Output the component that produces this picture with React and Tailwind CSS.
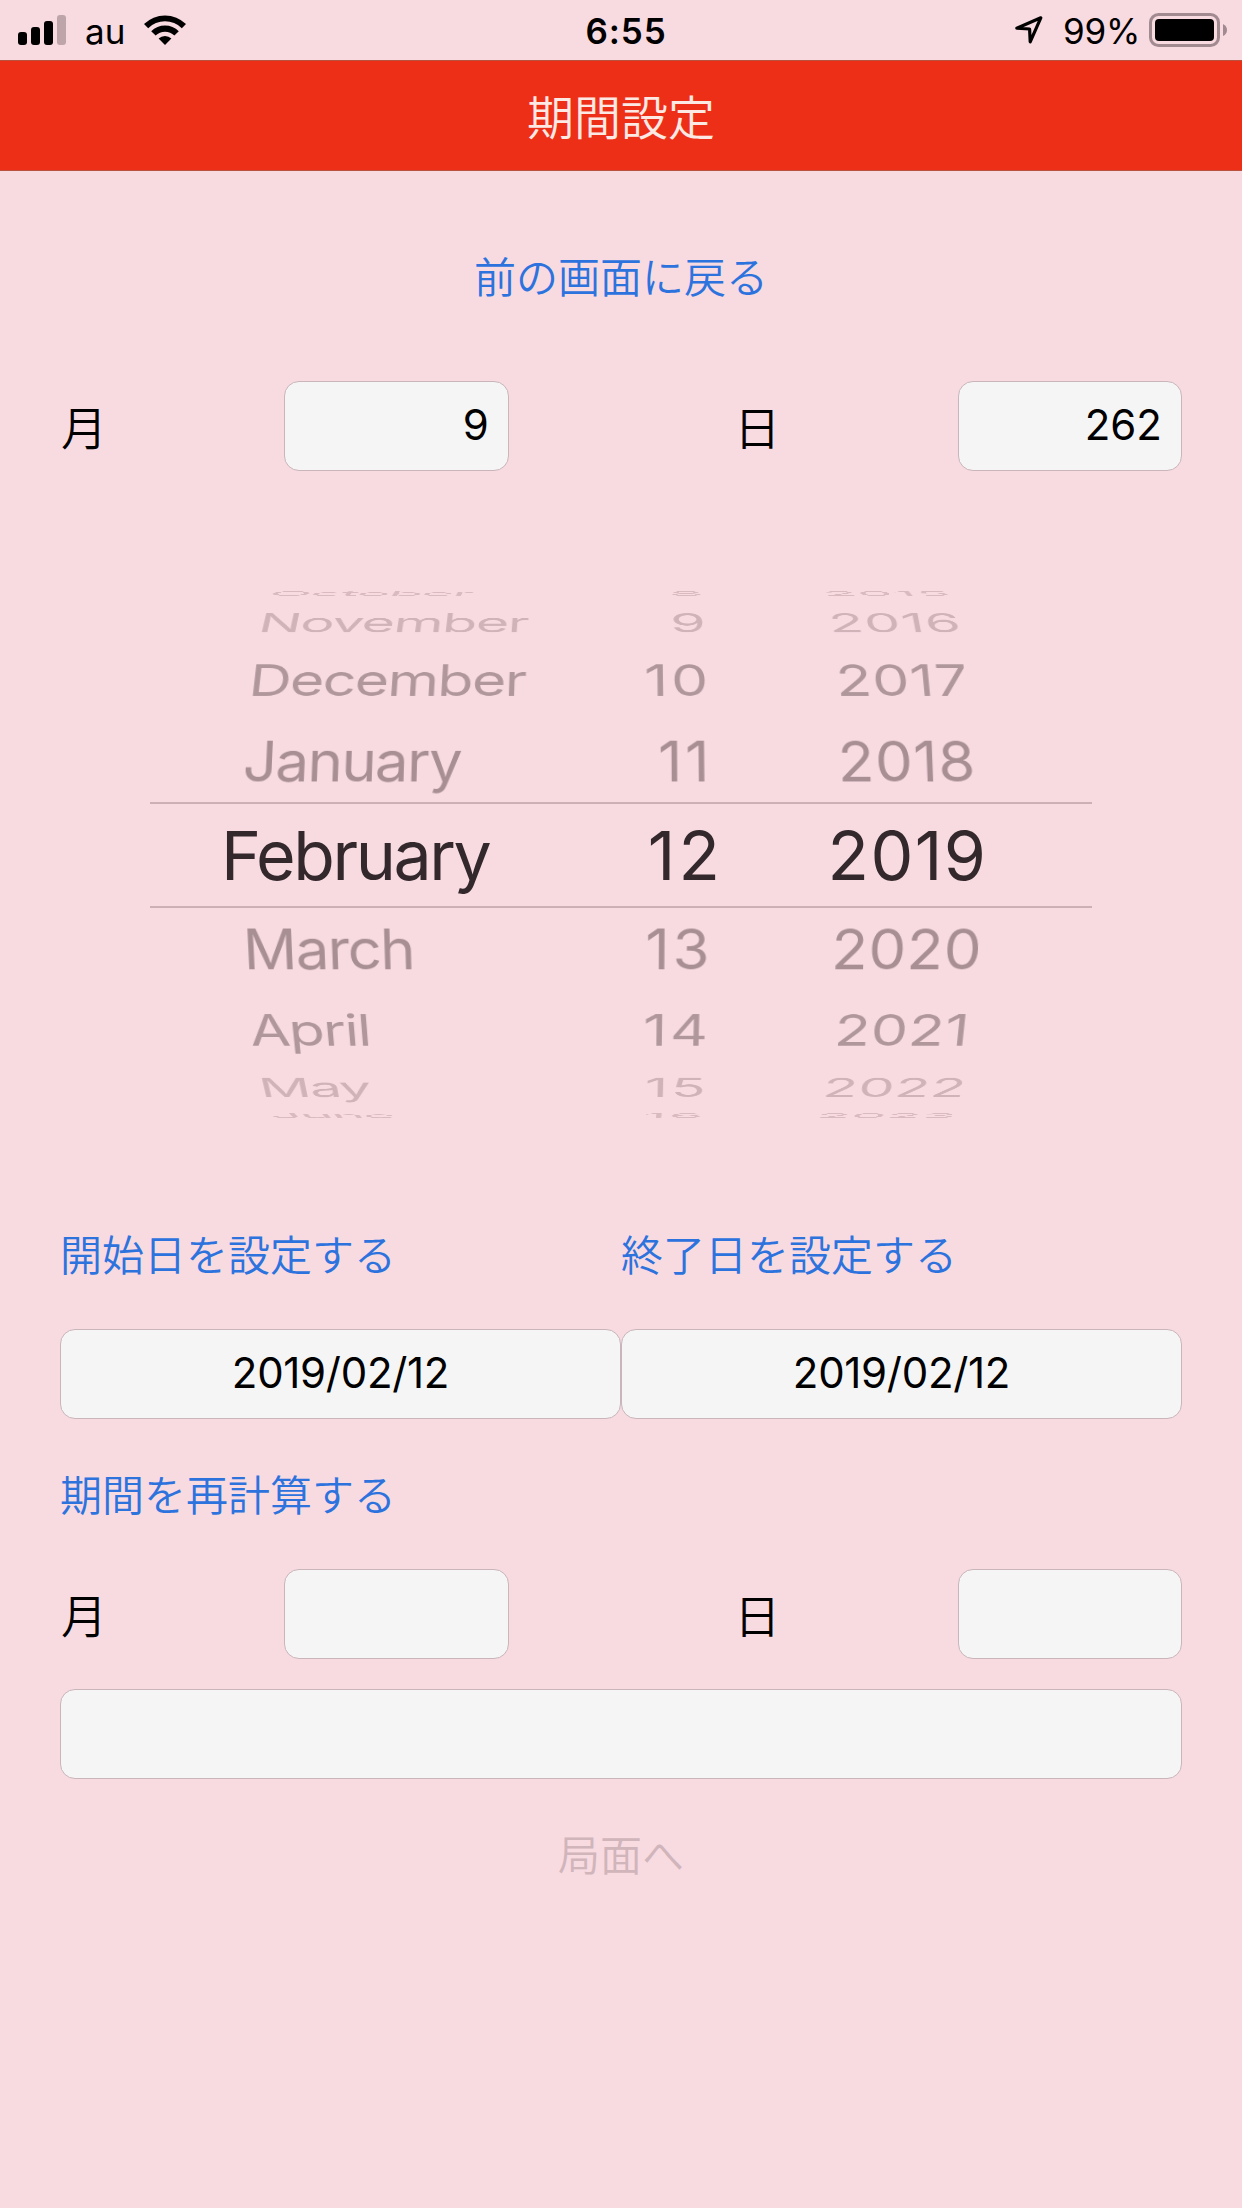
import React from 'react';

// Wheel rows from the top edge to the bottom edge.
// y / z / angle place each row on the cylinder, the selected one stays flat.
const ROWS = [
  { month: 'October', day: '8', year: '2015', y: -283, z: -230, angle: 78, tone: 'text-[#d8babf]' },
  { month: 'November', day: '9', year: '2016', y: -244, z: -140, angle: 58, tone: 'text-[#d0b3b9]' },
  { month: 'December', day: '10', year: '2017', y: -179, z: -64, angle: 39.5, tone: 'text-[#af979c]' },
  { month: 'January', day: '11', year: '2018', y: -94.5, z: -16, angle: 19.5, tone: 'text-[#a78f94]' },
  { month: 'March', day: '13', year: '2020', y: 94.5, z: -16, angle: -19.5, tone: 'text-[#a78f94]' },
  { month: 'April', day: '14', year: '2021', y: 179, z: -64, angle: -39.5, tone: 'text-[#af979c]' },
  { month: 'May', day: '15', year: '2022', y: 244, z: -140, angle: -58, tone: 'text-[#d0b3b9]' },
  { month: 'June', day: '16', year: '2023', y: 282, z: -230, angle: -78, tone: 'text-[#d8babf]' },
];

const StatusBar = () => (
  <div className="h-[60px] grid grid-cols-3 items-center text-[35px] leading-[60px] text-black shrink-0">
    <div className="flex items-center pl-[18px]">
      <svg className="w-12 h-[30px]" viewBox="0 0 48 30">
        <rect x="0" y="17" width="9" height="13" rx="3" />
        <rect x="13" y="12" width="9" height="18" rx="3" />
        <rect x="26" y="6" width="9" height="24" rx="3" />
        <rect x="39" y="0" width="9" height="30" rx="3" fill="#bda5aa" />
      </svg>
      <span className="ml-[19px] w-[41px] h-[60px] leading-[62px]">au</span>
      <svg className="ml-[18px] w-[42px] h-[30px]" viewBox="0 0 42 30">
        <path d="M0 9 A30 30 0 0 1 42 9 L37.8 13.2 A24 24 0 0 0 4.2 13.2 Z" />
        <path d="M7.2 16.3 A19.6 19.6 0 0 1 34.8 16.3 L30.4 20.6 A13.4 13.4 0 0 0 11.6 20.6 Z" />
        <path d="M14.6 23.6 A9.2 9.2 0 0 1 27.4 23.6 L21 30 Z" />
      </svg>
    </div>
    <div className="h-[60px] leading-[62px] text-center font-semibold pl-[10px] tracking-[0.9px]">6:55</div>
    <div className="flex items-center justify-end pr-[15px]">
      <svg className="w-[28px] h-[28px]" viewBox="0 0 28 28" fill="none" stroke="#000" strokeWidth="3.2" strokeLinejoin="round">
        <path d="M1.8 12.2 L25.8 1.8 L15.2 25.8 L14.6 13 Z" />
      </svg>
      <span className="ml-[20px] w-[86px] h-[60px] leading-[62px] whitespace-nowrap tracking-[-0.2px]">99%</span>
      <svg className="w-[78px] h-[34px]" viewBox="0 0 78 34">
        <rect x="1.5" y="1.5" width="68" height="31" rx="8" fill="none" stroke="#a18b91" strokeWidth="3" />
        <rect x="6" y="6" width="59" height="22" rx="4" />
        <path d="M74 11 Q78 13 78 17 Q78 21 74 23 Z" fill="#a18b91" />
      </svg>
    </div>
  </div>
);

const Field = ({ value = '', className = '' }) => (
  <div className={`h-[90px] rounded-[15px] border border-[#c9b5ba] bg-[#f5f5f5] px-[19px] text-[42px] leading-[85px] text-black ${className}`}>
    {value}
  </div>
);

const CountRow = ({ months, days }) => (
  <div className="grid grid-cols-5 items-center text-[46px] font-[350] text-black">
    <span className="pl-[1px] pt-[4px] leading-[86px]">月</span>
    <Field value={months} className="text-right font-normal" />
    <span />
    <span className="pl-[1px] pt-[4px] leading-[86px]">日</span>
    <Field value={days} className="text-right font-normal" />
  </div>
);

const LinkText = ({ children, className = '' }) => (
  <button className={`block h-[90px] pt-[3px] text-[42px] leading-[87px] font-[350] text-[#2d73de] ${className}`}>{children}</button>
);

const DateWheel = () => (
  <div className="h-[648px] grid items-center justify-items-stretch perspective-[2800px]">
    {ROWS.map((row) => (
      <div
        key={row.month}
        className={`[grid-area:1/1] grid grid-cols-[468px_182px_392px_200px] text-[60px] leading-[72px] ${row.tone}`}
        style={{ transform: `translate3d(0, ${row.y}px, ${row.z}px) rotateX(${row.angle}deg)` }}
      >
        <span className="pl-[241px] tracking-[-1.5px]">{row.month}</span>
        <span className="text-right -mr-[63px] tracking-[3px]">{row.day}</span>
        <span className="text-center ml-[125px] tracking-[0.7px]">{row.year}</span>
      </div>
    ))}
    <div className="[grid-area:1/1] mx-[150px] h-[106px] border-y-2 border-[#cdb0b5] grid grid-cols-[318px_252px_372px] text-[68px] leading-[102px] text-[#33292c]">
      <span className="pl-[71px] tracking-[-2.4px]">February</span>
      <span className="text-right tracking-[3px] -mr-[3px]">12</span>
      <span className="text-center pl-[3px] tracking-[1.4px]">2019</span>
    </div>
  </div>
);

const App = () => (
  <div className="w-[1242px] h-[2208px] overflow-hidden bg-[#f8dae1] flex flex-col font-['Inter','Noto_Sans_CJK_JP',sans-serif]">
    <StatusBar />
    <header className="h-[111px] shrink-0 bg-[#ee2f18] border-y border-[#b9513f] text-center text-[47px] leading-[113px] font-[350] text-[#fde9e4]">
      期間設定
    </header>

    <div className="pt-[60px] px-[60px] flex flex-col gap-[60px]">
      <LinkText className="text-center">前の画面に戻る</LinkText>
      <CountRow months="9" days="262" />
    </div>

    <div className="mt-[60px]">
      <DateWheel />
    </div>

    <div className="mt-[30px] px-[60px] flex flex-col gap-[30px]">
      <div className="grid grid-cols-2">
        <LinkText className="text-left">開始日を設定する</LinkText>
        <LinkText className="text-left">終了日を設定する</LinkText>
      </div>
      <div className="grid grid-cols-2">
        <Field value="2019/02/12" className="text-center tracking-[-0.3px]" />
        <Field value="2019/02/12" className="text-center tracking-[-0.3px]" />
      </div>
      <LinkText className="text-left">期間を再計算する</LinkText>
      <CountRow />
      <Field />
      <button className="h-[90px] pt-[3px] text-center text-[42px] leading-[87px] font-[350] text-[#d0b5bb]">局面へ</button>
    </div>
  </div>
);

export default App;
